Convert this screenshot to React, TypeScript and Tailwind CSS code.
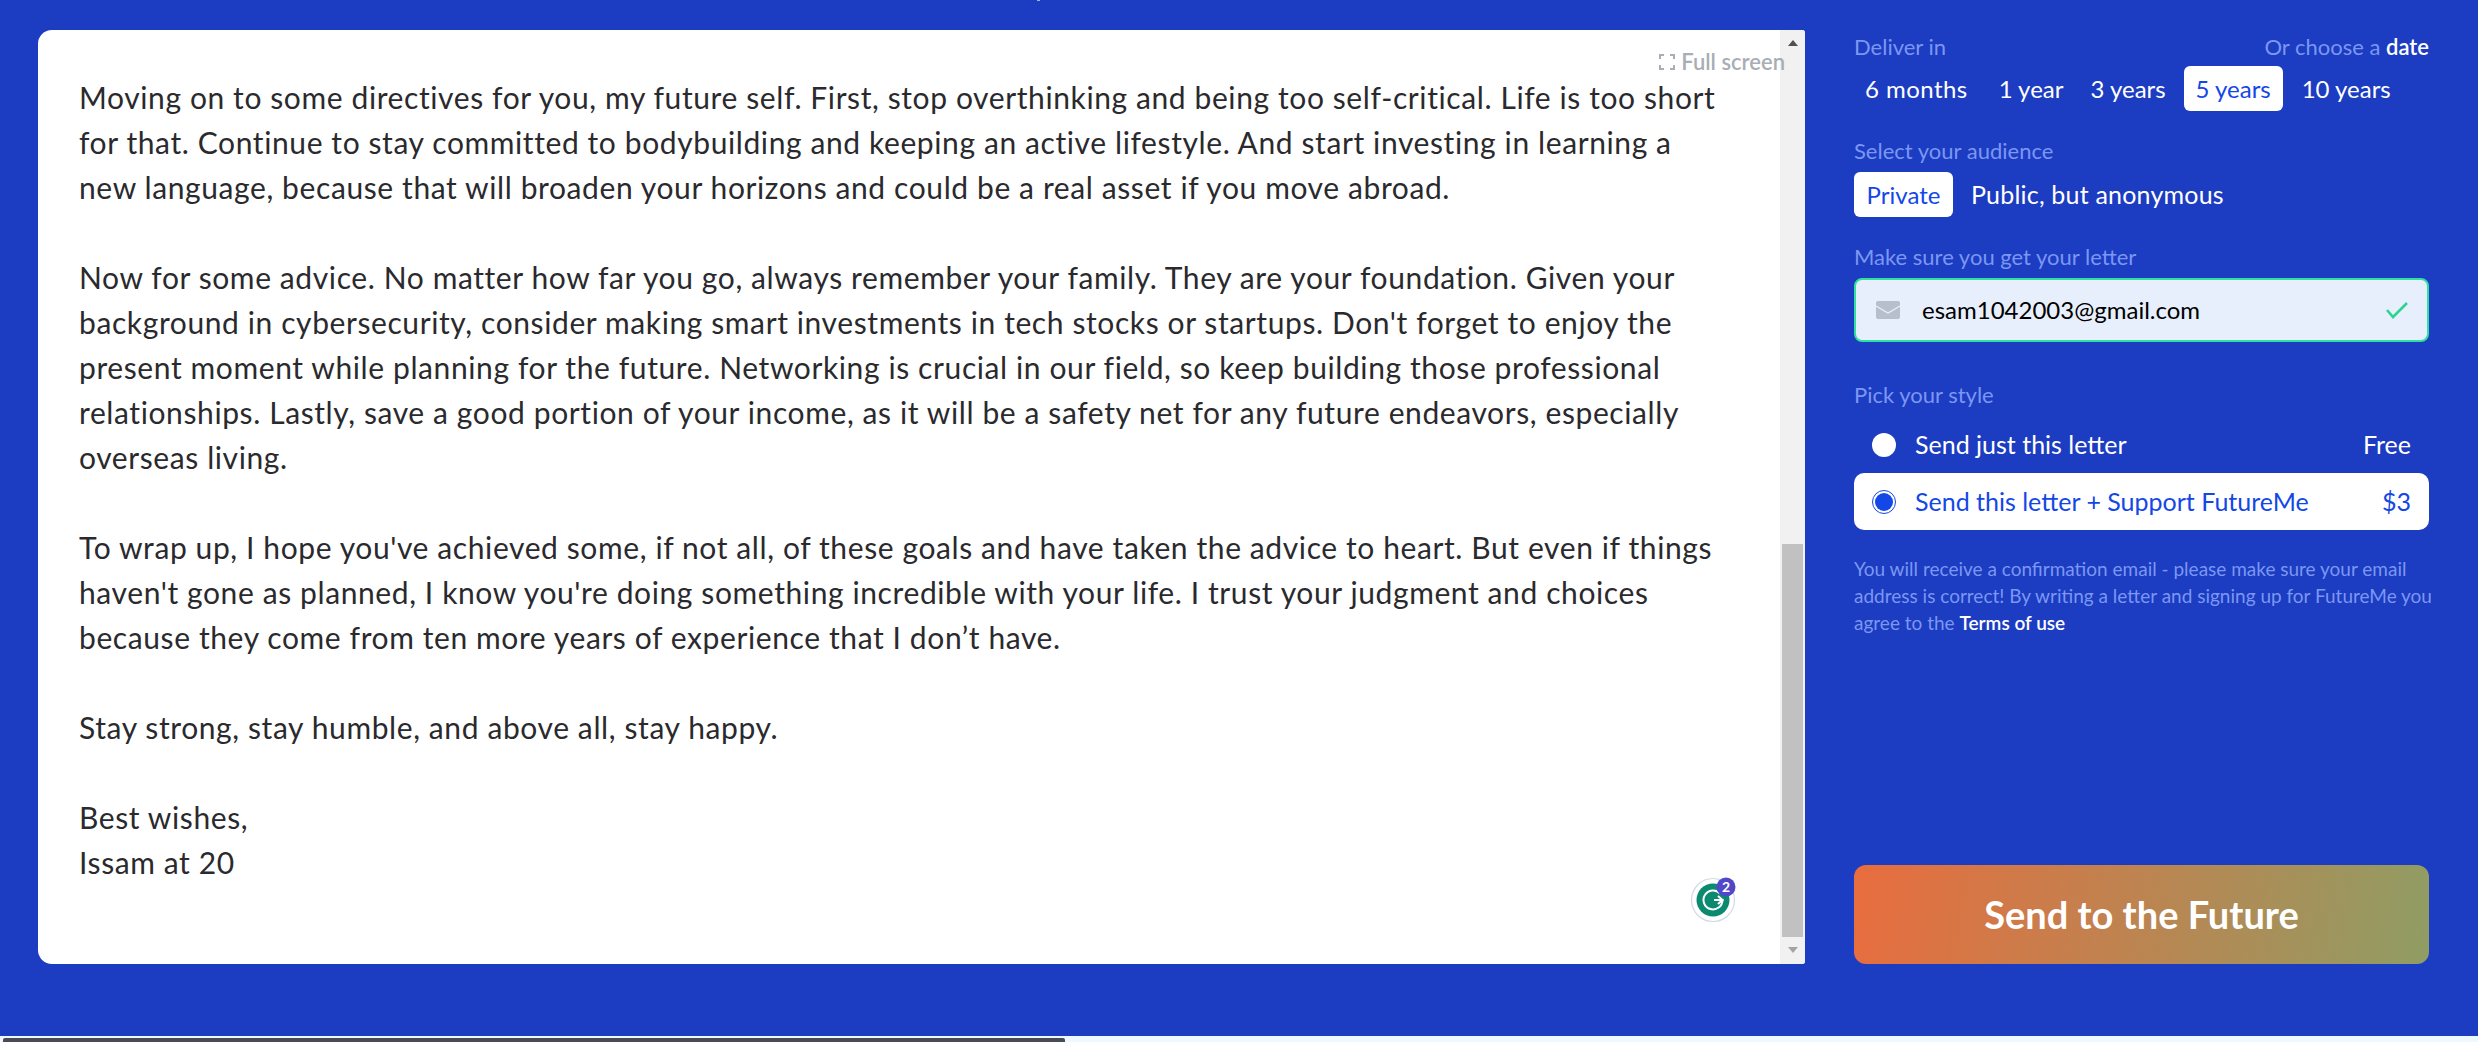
const lines = [
  "Moving on to some directives for you, my future self. First, stop overthinking and being too self-critical. Life is too short",
  "for that. Continue to stay committed to bodybuilding and keeping an active lifestyle. And start investing in learning a",
  "new language, because that will broaden your horizons and could be a real asset if you move abroad.",
  "",
  "Now for some advice. No matter how far you go, always remember your family. They are your foundation. Given your",
  "background in cybersecurity, consider making smart investments in tech stocks or startups. Don't forget to enjoy the",
  "present moment while planning for the future. Networking is crucial in our field, so keep building those professional",
  "relationships. Lastly, save a good portion of your income, as it will be a safety net for any future endeavors, especially",
  "overseas living.",
  "",
  "To wrap up, I hope you've achieved some, if not all, of these goals and have taken the advice to heart. But even if things",
  "haven't gone as planned, I know you're doing something incredible with your life. I trust your judgment and choices",
  "because they come from ten more years of experience that I don’t have.",
  "",
  "Stay strong, stay humble, and above all, stay happy.",
  "",
  "Best wishes,",
  "Issam at 20",
];

function Radio({ active }: { active?: boolean }) {
  return active ? (
    <span className="flex h-6 w-6 items-center justify-center rounded-full border border-[#1347e6] bg-white">
      <span className="h-[18px] w-[18px] rounded-full bg-[#1347e6]" />
    </span>
  ) : (
    <span className="h-6 w-6 rounded-full bg-white" />
  );
}

function Grammarly() {
  return (
    <svg width="50" height="50" viewBox="0 0 50 50" className="absolute bottom-[42px] right-[64px]">
      <circle cx="22" cy="28" r="21.5" fill="#fff" stroke="#d5d8e6" strokeWidth="1.2" />
      <circle cx="22" cy="28" r="16.5" fill="#0c8a70" />
      <path d="M29 21.5A9.5 9.5 0 1 0 31.5 28H23" fill="none" stroke="#fff" strokeWidth="2" />
      <path d="M27 24l4.5 4-4.5 4" fill="none" stroke="#fff" strokeWidth="2" />
      <circle cx="35" cy="15" r="9.5" fill="#5147c9" />
      <text x="35" y="20" textAnchor="middle" fontSize="14" fontWeight="700" fill="#fff" fontFamily="Lato, sans-serif">2</text>
    </svg>
  );
}

export default function App() {
  return (
    <div className="relative flex h-[1042px] w-[2478px] flex-col overflow-hidden bg-[#1c3cc1] font-['Lato','Noto_Sans',sans-serif]">
      <span className="absolute left-[1037px] top-0 h-[1px] w-[3px] bg-[#9fb4f5]" />
      <div className="flex flex-1 pl-[38px] pt-[30px]">
        <div className="relative flex h-[934px] w-[1767px] overflow-hidden rounded-l-[14px] rounded-r-[3px] bg-white">
          <div className="flex-1 overflow-hidden pl-[41px] pt-[45px] text-[30px] leading-[45px] tracking-[0.6px] text-[#2a2a2e]">
            {lines.map((l, i) => (
              <div key={i} className="h-[45px] whitespace-nowrap">
                {l}
              </div>
            ))}
          </div>
          <div className="flex w-[25px] flex-col items-center bg-[#f1f1f1]">
            <div className="flex h-[25px] items-center justify-center">
              <span className="h-0 w-0 border-x-[5px] border-b-[6px] border-x-transparent border-b-[#505050]" />
            </div>
            <div className="mt-[489px] h-[393px] w-[21px] bg-[#c1c1c1]" />
            <div className="flex h-[25px] items-center justify-center">
              <span className="h-0 w-0 border-x-[5px] border-t-[6px] border-x-transparent border-t-[#a3a3a3]" />
            </div>
          </div>
          <div className="absolute right-[20px] top-[20px] flex items-center gap-[6px] text-[22px] font-semibold leading-[24px] text-[#a9adb5]">
            <svg width="16" height="16" viewBox="0 0 16 16" fill="none" stroke="#a9adb5" strokeWidth="2">
              <path d="M1 5V1h4M11 1h4v4M15 11v4h-4M5 15H1v-4" />
            </svg>
            Full screen
          </div>
          <Grammarly />
        </div>

        <div className="ml-[49px] flex h-[934px] w-[575px] flex-col">
          <div className="flex h-[36px] items-center justify-between pb-[2px] text-[22px] leading-[24px] text-[#7b97f3]">
            <span>Deliver in</span>
            <span>
              Or choose a <span className="font-semibold text-white">date</span>
            </span>
          </div>
          <div className="flex h-[45px] text-[24px] leading-[45px] text-white">
            <span className="px-[11px] tracking-[0.45px]">6 months</span>
            <span className="ml-[9px] px-[11px]">1 year</span>
            <span className="ml-[5px] px-[11px]">3 years</span>
            <span className="ml-[7px] w-[99px] rounded-[6px] bg-white text-center text-[#1347e6]">5 years</span>
            <span className="ml-[8px] px-[11px]">10 years</span>
          </div>

          <div className="mt-[28px] text-[22px] leading-[24px] text-[#7b97f3]">Select your audience</div>
          <div className="mt-[9px] flex h-[45px] text-[24px] leading-[45px] text-white">
            <span className="w-[99px] rounded-[6px] bg-white text-center text-[#1347e6]">Private</span>
            <span className="ml-[18px] text-[25px] tracking-[0.2px]">Public, but anonymous</span>
          </div>

          <div className="mt-[28px] text-[22px] leading-[24px] text-[#7b97f3]">Make sure you get your letter</div>
          <div className="mt-[9px] flex h-[64px] items-center rounded-[8px] border-2 border-[#2fe0a0] bg-[#e8effc] pl-[20px] pr-[18px]">
            <svg width="24" height="18" viewBox="0 0 24 18">
              <rect width="24" height="18" rx="2" fill="#b7bfcc" />
              <path d="M0 5l12 7 12-7" fill="none" stroke="#e8effc" strokeWidth="1.4" />
            </svg>
            <span className="ml-[22px] flex-1 text-[24px] text-black">esam1042003@gmail.com</span>
            <svg width="24" height="18" viewBox="0 0 24 18" fill="none" stroke="#2bd48f" strokeWidth="2.6">
              <path d="M2 9l6 7L22 2" />
            </svg>
          </div>

          <div className="mt-[41px] text-[22px] leading-[24px] text-[#7b97f3]">Pick your style</div>
          <div className="mt-[13px] flex h-[49px] items-center justify-between px-[18px] text-[25px] text-white">
            <span className="flex items-center gap-[19px]">
              <Radio />
              Send just this letter
            </span>
            <span>Free</span>
          </div>
          <div className="mt-[4px] flex h-[57px] items-center justify-between rounded-[10px] bg-white px-[18px] text-[25px] text-[#1347e6]">
            <span className="flex items-center gap-[19px]">
              <Radio active />
              Send this letter + Support FutureMe
            </span>
            <span>$3</span>
          </div>

          <p className="mt-[25px] whitespace-nowrap text-[19px] leading-[27px] text-[#7b97f3]">
            You will receive a confirmation email - please make sure your email
            <br />
            address is correct! By writing a letter and signing up for FutureMe you
            <br />
            agree to the <span className="font-semibold text-white">Terms of use</span>
          </p>

          <button className="mt-auto flex h-[99px] items-center justify-center rounded-[12px] bg-[linear-gradient(100deg,#e96c3e_0%,#8f9d64_100%)] text-[38px] font-bold text-white">
            Send to the Future
          </button>
        </div>
      </div>
      <div className="h-[6px] bg-[#eef9ff] pt-[2px]">
        <div className="ml-[3px] h-[4px] w-[1062px] rounded-t-[2px] bg-[#4b4b55]" />
      </div>
    </div>
  );
}
